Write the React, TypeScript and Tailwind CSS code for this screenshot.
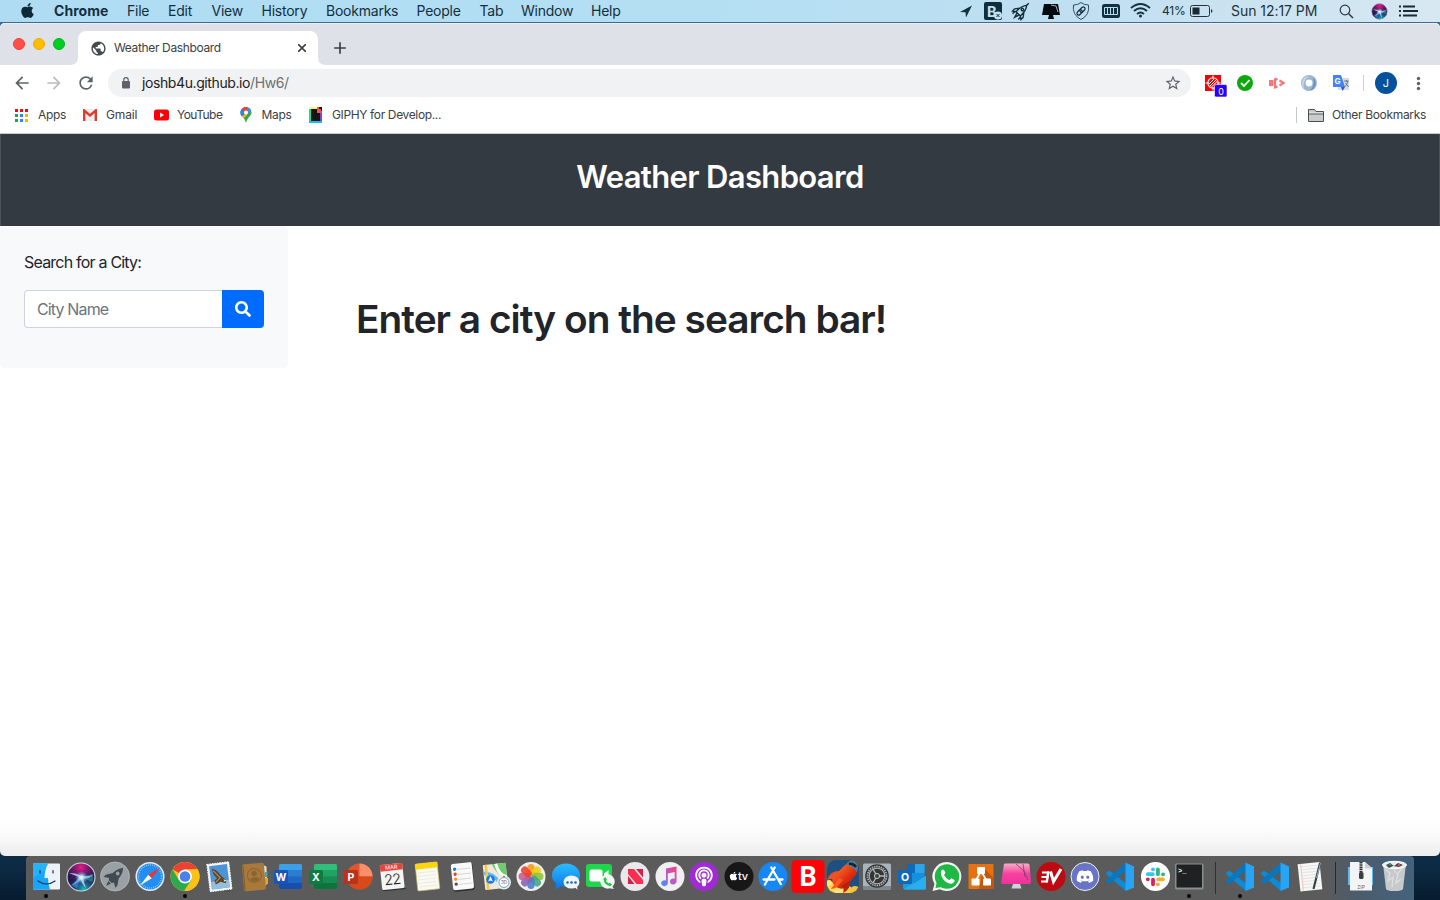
import React from "react";
import { FaApple, FaDiscord, FaSearch, FaPodcast } from "react-icons/fa";
import { MdArrowBack, MdArrowForward, MdRefresh, MdStarBorder, MdAdd, MdPublic } from "react-icons/md";

type Kids = { children?: React.ReactNode };

function Ic({ children }: Kids) {
  return (
    <svg width="34" height="34" viewBox="0 0 34 34" className="block shrink-0" fontFamily="Inter, 'Liberation Sans', sans-serif">
      {children}
    </svg>
  );
}

function Slot({ children, dot }: Kids & { dot?: boolean }) {
  return (
    <div className="flex w-[34.65px] shrink-0 flex-col items-center">
      {children}
      {dot && <span className="block h-1 w-1 rounded-full bg-black" />}
    </div>
  );
}

const petals: [number, string][] = [
  [0, "#f99a1b"], [45, "#f1cf0b"], [90, "#8fc33a"], [135, "#3fa985"],
  [180, "#4a7fc8"], [225, "#8463b8"], [270, "#c25f95"], [315, "#ef4030"],
];

function Office({ dark, mid, light, badge, letter }: { dark: string; mid: string; light: string; badge: string; letter: string }) {
  return (
    <Ic>
      <rect x="8" y="4" width="23" height="25" rx="1.5" fill={mid} />
      <path d="M8 5.5Q8 4 9.500 4H29.500Q31 4 31 5.500V10H8Z" fill={light} />
      <path d="M8 16.500H31V23H8Z" fill={dark} opacity=".5" />
      <path d="M8 23H31V27.500Q31 29 29.500 29H9.500Q8 29 8 27.500Z" fill={dark} />
      <rect x="3" y="10" width="14" height="14" rx="1.500" fill={badge} />
      <text x="10" y="21" fontSize="10.500" fontWeight="700" fill="#fff" textAnchor="middle">{letter}</text>
    </Ic>
  );
}

function Code() {
  return (
    <Ic>
      <path d="M3 13L6 10.500L24 24L23 31L3 14Z" fill="#0c8bd8" />
      <path d="M23 2.500L24 10L6 24L3 21.500V20.500Z" fill="#0877bd" />
      <path d="M22.500 2.500L31 6.500V27.500L22.500 31Z" fill="#27a4f4" />
    </Ic>
  );
}

function Siri({ s }: { s: number }) {
  return (
    <svg width={s} height={s} viewBox="0 0 30 30" className="block">
      <defs>
        <radialGradient id="siriGlow"><stop offset="0" stopColor="#fff" /><stop offset=".3" stopColor="#c5f2fb" stopOpacity=".85" /><stop offset="1" stopColor="#4aa8f0" stopOpacity="0" /></radialGradient>
        <radialGradient id="siriPink" cx=".5" cy=".15" r=".55"><stop offset="0" stopColor="#f0198c" /><stop offset="1" stopColor="#8a1a80" stopOpacity="0" /></radialGradient>
        <radialGradient id="siriTeal" cx=".6" cy=".95" r=".55"><stop offset="0" stopColor="#10c3c9" /><stop offset="1" stopColor="#1a5080" stopOpacity="0" /></radialGradient>
      </defs>
      <circle cx="15" cy="15" r="14" fill="#251a50" />
      <circle cx="15" cy="15" r="14" fill="url(#siriPink)" />
      <circle cx="15" cy="15" r="14" fill="url(#siriTeal)" />
      <path d="M3 11Q11 11 15 14Q21 15 27 13Q21 18 17 16Q18 21 20 26Q15 21 15 17Q11 22 6 23Q12 18 13 15Q8 13 3 11Z" fill="#d8f4fb" opacity=".75" />
      <path d="M15 15L5 23Q8 25 11 26Z" fill="#3f8ff0" opacity=".6" /><path d="M15 15L27 12Q28 17 26 20Z" fill="#3ad5d0" opacity=".4" />
      <circle cx="15.500" cy="15.500" r="6.500" fill="url(#siriGlow)" />
      <circle cx="15" cy="15" r="14" fill="none" stroke="#d8d5df" strokeWidth="1.100" />
    </svg>
  );
}

function Dock() {
  return (
    <div className="mx-[26px] flex h-[44px] rounded-t-[4px] bg-[linear-gradient(90deg,#5b5b5b_0,#5b5b5b_1300px,#4b5c6b_1330px,#44627d_1388px)] pl-[2.700px] pt-1">
      <Slot dot><Ic>
        <rect x="4" y="3.500" width="27" height="26" rx="1" fill="#edf2f8" />
        <path d="M4 3.500H19Q15.500 10 15.500 18H19Q19 24 21 29.500H4Z" fill="#16a6fb" />
        <path d="M4 3.500H19L15 11L4 18Z" fill="#2db9ff" opacity=".7" />
        <path d="M11 10.500V13M24 10.500V13M9 21Q17.500 27 26 21" stroke="#17324c" strokeWidth="1.200" fill="none" strokeLinecap="round" />
      </Ic></Slot>
      <Slot><div className="flex h-[34px] items-start pt-[1.500px]"><Siri s={30} /></div></Slot>
      <Slot><Ic>
        <circle cx="17" cy="16.500" r="14.500" fill="#9aa1a5" stroke="#bcc2c5" strokeWidth=".7" />
        <g transform="translate(17 16.500) rotate(43)" fill="#43494e">
          <path d="M0-12Q5-6 4 4L2 7H-2L-4 4Q-5-6 0-12Z" /><path d="M-4-1L-8 5V8L-3 5ZM4-1L8 5V8L3 5ZM-1.800 8H1.800L0 13Z" />
          <circle cy="-4" r="1.900" fill="#9aa1a5" />
        </g>
      </Ic></Slot>
      <Slot><Ic>
        <circle cx="17" cy="16.500" r="14.500" fill="#e8edf1" /><circle cx="17" cy="16.500" r="13" fill="#218ef0" />
        <circle cx="17" cy="16.500" r="11.500" fill="none" stroke="#b7e0ff" strokeWidth="1.500" strokeDasharray=".6 1.400" />
        <path d="M27 7.500L18.800 18.300L15.200 14.700Z" fill="#f3312f" /><path d="M7 25.500L15.200 14.700L18.800 18.300Z" fill="#f5f5f5" />
      </Ic></Slot>
      <Slot dot><Ic>
        <circle cx="17" cy="16.500" r="14.500" fill="#fbc116" />
        <path d="M17 16.500L4.500 9.300A14.500 14.500 0 0 1 29.600 9.300H17Z" fill="#ea4335" />
        <path d="M4.500 9.300L10.800 20.100L17 23.700L17 31A14.500 14.500 0 0 1 4.500 9.300Z" fill="#2da94f" />
        <path d="M17 31L23.200 20.100L10.800 20.100Z" fill="#2da94f" /><path d="M29.600 9.300A14.500 14.500 0 0 1 16 31L23.300 20L23.300 9.300Z" fill="#fbc116" />
        <circle cx="17" cy="16.500" r="6.900" fill="#fff" /><circle cx="17" cy="16.500" r="5.300" fill="#4a80ed" />
      </Ic></Slot>
      <Slot><Ic>
        <circle cx="25" cy="26" r="6" fill="#383c40" opacity=".35" />
        <g transform="rotate(-7 17 17)"><rect x="6.500" y="3" width="22" height="27.500" fill="#f3f5f6" stroke="#fff" strokeDasharray="1.500 1" />
          <rect x="8.500" y="5" width="18" height="23.500" fill="#4c94da" /><path d="M8.500 21H26.500V28.500H8.500Z" fill="#93c0e2" />
          <path d="M11 8Q15 9 18 14Q20 18 24 21L23 24L18 22L13 24L12 20L15 18Q11 14 11 8Z" fill="#5f4426" /><path d="M12 10L18 18L13 22" stroke="#b98d50" fill="none" strokeWidth="1.200" /><path d="M21 20L24.500 21L22 22.500Z" fill="#efe4c4" /></g>
      </Ic></Slot>
      <Slot><Ic>
        <path d="M26 5L29.500 6.500L30 24L27 27Z" fill="#ddd" /><path d="M28 12H30.500V17H28Z" fill="#37a9b4" /><path d="M28 18H31V24H28Z" fill="#e8a62b" />
        <g transform="rotate(-5 17 17)"><rect x="6" y="3.500" width="22" height="27" rx="2" fill="#a8793a" /><path d="M7 5V29" stroke="#895d27" strokeWidth="1" />
          <circle cx="17.500" cy="15.500" r="7" fill="none" stroke="#8b642f" /><circle cx="17.500" cy="13.500" r="2.800" fill="#8b642f" /><path d="M12.500 19.500Q17.500 14.500 22.500 19.500Q17.500 24 12.500 19.500Z" fill="#8b642f" /></g>
      </Ic></Slot>
      <Slot><Office light="#3ba0e8" mid="#2b7cd3" dark="#174faf" badge="#1854ba" letter="W" /></Slot>
      <Slot><Office light="#30be7a" mid="#21a366" dark="#10733e" badge="#107c41" letter="X" /></Slot>
      <Slot><Ic>
        <circle cx="18.500" cy="16.500" r="13" fill="#df552f" /><path d="M18.500 3.500A13 13 0 0 1 31.500 16.500H18.500Z" fill="#ff8f6b" /><path d="M5.500 16.500H31.500A13 13 0 0 1 5.500 16.500Z" fill="#d64a1b" />
        <rect x="3" y="10" width="14" height="14" rx="1.500" fill="#b9331a" /><text x="10" y="21" fontSize="10.500" fontWeight="700" fill="#fff" textAnchor="middle">P</text>
      </Ic></Slot>
      <Slot><Ic><g transform="rotate(-6 17 17)">
        <path d="M6 29L28 29L30 30.500H8Z" fill="#333" /><rect x="6" y="4" width="22.500" height="25" rx="1.500" fill="#f5f5f3" /><path d="M6 10.500V5.500Q6 4 7.500 4H27Q28.500 4 28.500 5.500V10.500Z" fill="#e7443e" />
        <text x="17.300" y="9.200" fontSize="5.500" fill="#fff" textAnchor="middle">MAR</text><text x="17" y="24.500" fontSize="14.500" fontWeight="300" fill="#222" textAnchor="middle" letterSpacing="-.9">22</text></g>
      </Ic></Slot>
      <Slot><Ic><g transform="rotate(-6 17 17)">
        <rect x="6.500" y="3" width="22" height="27" rx="1" fill="#fbfaf0" stroke="#c9bc73" strokeWidth=".7" /><path d="M6.500 3H28.500V8.500H6.500Z" fill="#fdd50e" /><path d="M8 12H26M8 15.500H26M8 19H26M8 22.500H26M8 26H26" stroke="#ddd" strokeWidth=".5" /></g>
      </Ic></Slot>
      <Slot><Ic><g transform="rotate(-6 17 17)">
        <rect x="7.500" y="4" width="21" height="27" rx="2" fill="#2e2e2e" /><rect x="7" y="3" width="21" height="26.500" rx="2" fill="#fafafa" />
        <path d="M13 9H26M13 14H26M13 19H26M13 24H26" stroke="#c8c8c8" strokeWidth=".7" />
        <circle cx="10.500" cy="8.500" r="1.700" fill="#2679f5" /><circle cx="10.500" cy="13.500" r="1.700" fill="#f04424" /><circle cx="10.500" cy="18.500" r="1.700" fill="#f69221" /><circle cx="10.500" cy="23.500" r="1.700" fill="#51575e" /></g>
      </Ic></Slot>
      <Slot><Ic><g transform="rotate(-6 16 17)">
        <rect x="5" y="4" width="23" height="25" rx="1" fill="#eee9da" /><path d="M14 4H28V18Q19 17 14 4Z" fill="#70cb6b" /><path d="M18 4Q20 16 28 18" stroke="#fff" strokeWidth="3" fill="none" /><path d="M5 12Q18 14 22 29" stroke="#62b7ef" strokeWidth="3.500" fill="none" /><path d="M8 4V29" stroke="#f7c746" strokeWidth="2.500" /></g>
        <circle cx="11.500" cy="19.500" r="4.300" fill="#1479ed" /><path d="M11.500 16L13.800 21.500L11.500 20.500L9.200 21.500Z" fill="#fff" />
        <circle cx="25" cy="22.500" r="7" fill="#e7edf1" /><circle cx="25" cy="22.500" r="5" fill="#fafafa" stroke="#6c8ba2" strokeWidth=".8" /><text x="25" y="24.200" fontSize="4.500" textAnchor="middle" fill="#567">3D</text><path d="M24 17H26L25 15.500Z" fill="#e22" />
      </Ic></Slot>
      <Slot><Ic>
        <circle cx="17" cy="16.500" r="14.500" fill="#efefef" />
        {petals.map(([a, c]) => <rect key={a} x="13.300" y="4" width="7.400" height="12" rx="3.700" fill={c} opacity=".88" transform={`rotate(${a} 17 16.500)`} />)}
      </Ic></Slot>
      <Slot><Ic>
        <defs><linearGradient id="msg" x2="0" y2="1"><stop stopColor="#2cbcff" /><stop offset="1" stopColor="#0876e8" /></linearGradient></defs>
        <path d="M17 3.500C25 3.500 31 8.500 31 15.500S25 27 17 27Q14 27 12 26Q9 29 5 29Q8 26 7 23Q3 20 3 15.500C3 8.500 9 3.500 17 3.500Z" fill="url(#msg)" />
        <ellipse cx="22.500" cy="22" rx="8" ry="6.600" fill="#eef5fc" /><path d="M25 26L28.500 30L28 25Z" fill="#eef5fc" />
        <circle cx="18.500" cy="22.500" r="1.300" fill="#176bb8" /><circle cx="22.500" cy="22.500" r="1.300" fill="#176bb8" /><circle cx="26.500" cy="22.500" r="1.300" fill="#176bb8" />
      </Ic></Slot>
      <Slot><Ic>
        <rect x="3" y="4" width="26" height="23" rx="3" fill="#1cd84a" /><rect x="6.500" y="9.500" width="13" height="12" rx="2" fill="#fff" /><path d="M21 13.500L25.500 10V21L21 17.500Z" fill="#fff" />
        <circle cx="24.500" cy="21.500" r="7.200" fill="#f4f6f5" /><path d="M25 28L31 29L28 25Z" fill="#f4f6f5" /><path d="M20.500 19L22 17L24 19.500L23 21L25.500 23.500L27 22.700L29 24.500L27.500 26.300Q21 25 20.500 19Z" fill="#20c849" />
      </Ic></Slot>
      <Slot><Ic>
        <circle cx="17" cy="16.500" r="14.500" fill="#e9e9eb" /><path d="M10 9H16L25 20V24H18.500L10 14Z" fill="#f92e52" /><path d="M18 9H25V17.500ZM10 16V24H16.500Z" fill="#d71e45" />
      </Ic></Slot>
      <Slot><Ic>
        <defs><linearGradient id="music" x1="1" y1="0" x2="0" y2="1"><stop stopColor="#fb3f6a" /><stop offset=".5" stopColor="#c055ce" /><stop offset="1" stopColor="#2e9ef8" /></linearGradient></defs>
        <circle cx="17" cy="16.500" r="14.500" fill="#f0f0f2" /><path d="M13 8.500L23.500 6.500V21.200A3.300 3 0 1 1 21.700 18.800V12L14.800 13.500V23A3.300 3 0 1 1 13 20.500Z" fill="url(#music)" />
      </Ic></Slot>
      <Slot><Ic><circle cx="17" cy="16.500" r="14.500" fill="#a12ad4" /><FaPodcast x="7" y="6.500" size={20} color="#fff" /></Ic></Slot>
      <Slot><Ic><circle cx="17" cy="16.500" r="14.500" fill="#171718" /><FaApple x="6.500" y="11" size={10} color="#fff" /><text x="16" y="20" fontSize="11" fontWeight="500" fill="#fff" letterSpacing="-.3">tv</text></Ic></Slot>
      <Slot><Ic><circle cx="17" cy="16.500" r="14.500" fill="#1787f5" /><path d="M18.700 7.500L10.300 22M15.300 7.500L24.800 24M7.500 19.500H18.500M22.500 19.500H26.500M9.500 23.400L8.900 24.500" stroke="#fff" strokeWidth="2.300" strokeLinecap="round" /></Ic></Slot>
      <Slot><Ic><rect x=".5" y="0" width="33" height="33" rx="4.500" fill="#fb0307" /><text x="17" y="26" fontFamily="Roboto, sans-serif" fontSize="27" fontWeight="700" fill="#fff" textAnchor="middle">B</text></Ic></Slot>
      <Slot><Ic>
        <defs><linearGradient id="hull" x1="0" y1="0" x2="1" y2="1"><stop offset=".2" stopColor="#fb6424" /><stop offset=".6" stopColor="#dc2c10" /><stop offset="1" stopColor="#9c1608" /></linearGradient></defs>
        <clipPath id="rk"><rect x="1" y="0" width="32" height="33" rx="9" /></clipPath>
        <g clipPath="url(#rk)"><rect width="34" height="34" fill="#1d4f80" />
          <circle cx="6" cy="28" r="6" fill="#ffd44c" /><circle cx="14" cy="30" r="6" fill="#ffe27a" /><circle cx="22" cy="31" r="5" fill="#ffcf45" /><circle cx="29" cy="31" r="5" fill="#f8c23e" /><circle cx="3" cy="23" r="3" fill="#ffe27a" />
          <path d="M19 5Q24 2 30 8Q33 12 28 17L20 27Q15 31 9 26Q4 21 8 16Z" fill="url(#hull)" />
          <path d="M13 11Q4 11 1 20Q5 18 9 20Z" fill="#f2501d" /><path d="M24 21Q25 29 17 33Q19 28 15 26Z" fill="#b8210c" />
          <path d="M13 18L5 29L10 28L17 20Z" fill="#fb5a22" />
          <path d="M20 5Q22 0 28 0Q34 4 31 12Q26 6 20 5Z" fill="#5c7b8a" /><path d="M23 4Q27 3 30 7" stroke="#0f2330" strokeWidth="2.600" fill="none" /></g>
      </Ic></Slot>
      <Slot><Ic>
        <rect x="3" y="3.500" width="28" height="26" rx="1.500" fill="#a8b4bc" /><path d="M3 26H31V29.500H3Z" fill="#7d878e" /><circle cx="17" cy="16" r="11.800" fill="#333537" /><circle cx="17" cy="16" r="9.500" fill="none" stroke="#b2b5b7" strokeWidth="1.800" strokeDasharray="1.400 .9" /><circle cx="17" cy="16" r="7.800" fill="none" stroke="#aeb2b5" strokeWidth="1.100" /><path d="M17 16L25 16M17 16L13 9M17 16L13 23" stroke="#b6babd" strokeWidth="1.400" /><circle cx="17" cy="16" r="2.600" fill="#444" stroke="#c4c7c9" />
      </Ic></Slot>
      <Slot><Ic>
        <rect x="12" y="4" width="17.500" height="18" rx="1" fill="#1490df" /><path d="M12 4H20V13H12Z" fill="#0f6abc" /><path d="M20 4H29.500V13H20Z" fill="#29a5ec" /><path d="M8 17L20 23L31 16V28Q31 29.500 29.500 29.500H10Q8 29.500 8 28Z" fill="#1b9de2" /><path d="M31 16L9 29Q9 29.500 10 29.500H29.500Q31 29.500 31 28Z" fill="#2aaef0" />
        <rect x="3" y="10" width="14" height="14" rx="1.500" fill="#0f68b8" /><text x="10" y="21" fontSize="10.500" fontWeight="700" fill="#fff" textAnchor="middle">O</text>
      </Ic></Slot>
      <Slot><Ic>
        <path d="M17 2A14.500 14.500 0 1 1 10 29.300L2.500 31L4.500 24A14.500 14.500 0 0 1 17 2Z" fill="#f4f6f5" /><circle cx="17" cy="16.500" r="12.200" fill="#20b844" /><path d="M5.500 28L7 21L12 27Z" fill="#20b844" />
        <path d="M11 11Q12.500 8.500 14 10L15.500 13L14 15Q16 19 19.500 20.200L21.200 18.300L24.500 20Q25 22.500 21.500 23.800C16 24 10 17.500 11 11Z" fill="#fff" />
      </Ic></Slot>
      <Slot><Ic>
        <rect x="4.500" y="4" width="25" height="25" rx="1" fill="#e8710f" /><path d="M20 8L29.500 18V29H15Z" fill="#c45709" /><path d="M17 11L10.500 23M17 11L24 23" stroke="#fff" strokeWidth="1.800" /><rect x="13" y="7" width="8" height="7" rx="1" fill="#fff" /><rect x="7.500" y="18.500" width="8" height="7" rx="1" fill="#fff" /><rect x="19" y="18.500" width="8" height="7" rx="1" fill="#fff" />
      </Ic></Slot>
      <Slot><Ic>
        <defs><linearGradient id="pinkScreen" x2="0" y2="1"><stop stopColor="#f9acc9" /><stop offset=".5" stopColor="#f9409f" /><stop offset="1" stopColor="#ed339d" /></linearGradient></defs>
        <path d="M5 4Q5 3.500 6.500 3.500H29Q30.500 3.500 30.500 5L32 22Q32 24 30 24H4Q2 24 2.200 22Z" fill="url(#pinkScreen)" /><path d="M14 24H21L22.500 28.500H12.500Z" fill="#ced1d6" /><path d="M17 4L25 11L29 20M24 4L26 17" stroke="#853e68" strokeWidth=".8" fill="none" />
      </Ic></Slot>
      <Slot><Ic><circle cx="17" cy="16.500" r="14.500" fill="#bd0910" /><path d="M8 12.500H15M7.500 17H14.500M7 21.500H13.500" stroke="#fff" strokeWidth="2.200" /><path d="M13 11.500H15.500L14 22.500H11.500Z" fill="#fff" /><path d="M16.500 11.500L19.500 21.500L27 9" stroke="#fff" strokeWidth="3" fill="none" /></Ic></Slot>
      <Slot><Ic><circle cx="17" cy="16.500" r="14" fill="#6874c5" stroke="#eee" /><FaDiscord x="8" y="7.500" size={18} color="#fff" /></Ic></Slot>
      <Slot><Code /></Slot>
      <Slot><Ic><circle cx="17.500" cy="16.500" r="14.500" fill="#fff" /><g strokeWidth="3.800" strokeLinecap="round">
        <path d="M9.800 14.200H14.800M15 9.300V9.400" stroke="#36c5f0" /><path d="M19.900 9.500V14.200M25 14.300H25.100" stroke="#2eb67d" /><path d="M20.200 19.300H25M19.900 24.300V24.400" stroke="#ecb22e" /><path d="M15 19.600V24.300M9.800 19.300H9.900" stroke="#e01e5a" /></g>
      </Ic></Slot>
      <Slot dot><Ic><rect x="3" y="3.500" width="28.500" height="26" rx="1.500" fill="#87908c" /><rect x="4.500" y="4.500" width="25.500" height="23" rx=".5" fill="#202122" /><text x="6" y="13" fontFamily="Liberation Mono, monospace" fontSize="7" fontWeight="700" fill="#fff">&gt;_</text></Ic></Slot>
      <div className="flex w-[16.500px] shrink-0 justify-center pt-[2px]"><span className="ml-[1px] h-[32px] w-px bg-[#303030]" /></div>
      <Slot dot><Code /></Slot>
      <Slot><Code /></Slot>
      <Slot><Ic><g transform="rotate(-6 17 17)"><rect x="6" y="3" width="22" height="27.500" fill="#f7f7f5" /><path d="M8 6H26M8 9H26M8 12H26M8 15H26M8 18H26M8 21H26M8 24H26M8 27H26" stroke="#d0d3d7" strokeWidth=".5" /><path d="M9 3V30" stroke="#f1a5a5" strokeWidth=".6" /></g><path d="M27 3L20.500 29" stroke="#343941" strokeWidth="2" /><path d="M27.500 3L23.500 18" stroke="#8eb0c8" strokeWidth="1" /></Ic></Slot>
      <div className="flex w-[16.500px] shrink-0 justify-center pt-[2px]"><span className="h-[32px] w-px bg-[#25292d]" /></div>
      <Slot><Ic><path d="M4 7H29V25H4Z" fill="#62bcec" /><path d="M6 2H21L28 8V30.500H6Z" fill="#f3f4f5" /><path d="M21 2V8.500H28Z" fill="#cbd1d5" /><path d="M17 2V14" stroke="#333" strokeWidth="3" strokeDasharray="1.500 .7" /><rect x="15" y="12" width="4.500" height="7" rx="1.500" fill="#3c3d3f" /><text x="17" y="28.500" fontSize="5" textAnchor="middle" fill="#666">ZIP</text></Ic></Slot>
      <Slot><Ic>
        <path d="M5 4H28L25 29Q24 31 16.500 31Q9 31 8 29Z" fill="#c6cacb" /><path d="M7 9L12 13L10 21L15 17L14 27M16 10L20 15L18 23L23 19M24 9L20 13" stroke="#eef0f0" strokeWidth="1.200" fill="none" opacity=".6" /><ellipse cx="16.500" cy="5" rx="12" ry="3.700" fill="#eee" stroke="#fff" /><path d="M8 5L12 3L16 6L20 3L25 5L21 7L15 6L11 8Z" fill="#454a4d" /><circle cx="12" cy="4" r="1.200" fill="#1aa2b5" /><circle cx="21" cy="5" r="1.200" fill="#d44e38" />
      </Ic></Slot>
    </div>
  );
}

function MenuBar() {
  return (
    <div className="flex h-[22px] items-center bg-[linear-gradient(90deg,#afdcf3_0,#b4dff3_50%,#c0dff1_75%,#d7e8f1_100%)] text-[14px] leading-[20px] tracking-[-0.230px] text-[#12303f] [&>span]:-mt-[1px]">
      <div className="w-[54px] pl-[19px]"><FaApple size={17} color="#0d2836" className="-mt-[2px]" /></div>
      <span className="w-[73px] font-bold tracking-[0.050px]">Chrome</span>
      <span className="w-[41px]">File</span>
      <span className="w-[43.500px]">Edit</span>
      <span className="w-[50px]">View</span>
      <span className="w-[64.500px]">History</span>
      <span className="w-[90.500px]">Bookmarks</span>
      <span className="w-[63px]">People</span>
      <span className="w-[41.500px]">Tab</span>
      <span className="w-[70px]">Window</span>
      <span>Help</span>
      <svg className="ml-auto block shrink-0" width="265" height="22" viewBox="955 0 265 22">
        <path d="M972 5.500L960 12L965.500 12.200L966 17.500Z" fill="#12303f" />
        <rect x="984" y="2" width="18" height="18" rx="2" fill="#0f2d3d" /><text x="987" y="16.500" fontFamily="Roboto" fontWeight="700" fontSize="15" fill="#c2e2f2">B</text><circle cx="998" cy="15.500" r="4" fill="#c2e2f2" /><path d="M996.500 14L999.500 17M999.500 14L996.500 17" stroke="#0f2d3d" />
        <g transform="translate(1021 11) rotate(45)" fill="none" stroke="#12303f" strokeWidth="1.400"><path d="M0-8Q3.500-4 3 4H-3Q-3.500-4 0-8ZM-3-1L-6 3V6L-3 4M3-1L6 3V6L3 4M-1.500 4L0 9L1.500 4" /><circle cy="-2" r="1.200" /><path d="M0-8V-11M-4 5V8M4 5V8" /></g>
        <path d="M1044 4H1058L1060 15H1042Z" fill="#030b10" /><path d="M1049 15H1053L1054 19H1048Z" fill="#030b10" /><path d="M1051 5L1056 6L1058 12" stroke="#b8dcef" strokeWidth=".8" fill="none" />
        <path d="M1081 2.500Q1084 5 1088.500 5Q1090 15 1081 19.500Q1072 15 1073.500 5Q1078 5 1081 2.500Z" fill="none" stroke="#31505f" strokeWidth="1" /><g fill="none" stroke="#12303f" strokeWidth="1.200" transform="translate(1081 11) rotate(-45)"><rect x="-5" y="-1.800" width="6" height="3.600" rx="1.800" /><rect x="-1" y="-1.800" width="6" height="3.600" rx="1.800" /></g>
        <rect x="1102" y="4" width="18" height="14" rx="2.500" fill="#12303f" /><path d="M1104.500 7.500H1117.500V14.500H1104.500ZM1107.500 7.500V14.500M1110.500 7.500V14.500M1113.500 7.500V14.500" fill="none" stroke="#b9ddee" strokeWidth="1" />
        <g fill="none" stroke="#12303f" strokeWidth="1.900"><path d="M1131 8Q1140.500 0 1150 8M1134 11Q1140.500 5.500 1147 11M1137 14Q1140.500 11 1144 14" /></g><circle cx="1140.500" cy="16" r="1.500" fill="#12303f" />
        <text x="1162" y="15" fontFamily="Inter" fontSize="12" letterSpacing="-.15" fill="#12303f">41%</text>
        <rect x="1190.500" y="5.500" width="19" height="11" rx="2" fill="none" stroke="#25323a" /><rect x="1192.500" y="7.500" width="7" height="7" fill="#172a35" /><path d="M1211 9Q1214 11 1211 13Z" fill="#25323a" />
      </svg>
      <span className="ml-[11px] w-[108px] shrink-0 tracking-[-0.050px] text-[#21323c]">Sun 12:17 PM</span>
      <svg width="15" height="15" viewBox="0 0 15 15" className="shrink-0"><circle cx="6" cy="6" r="4.800" fill="none" stroke="#2a3b45" strokeWidth="1.200" /><path d="M9.500 9.500L14 14" stroke="#2a3b45" strokeWidth="1.500" /></svg>
      <div className="ml-[17px]"><Siri s={17} /></div>
      <svg width="19" height="12" viewBox="0 0 19 12" className="ml-[11px] mr-[22px] shrink-0"><path d="M4 1.500H16M4 6H19M4 10.500H18M0 1.500H2M0 6H2M0 10.500H2" stroke="#1a2b34" strokeWidth="1.900" /></svg>
    </div>
  );
}

const appColors = ["#f30a0a", "#f30a0a", "#f30a0a", "#1da354", "#3384ed", "#f7b500", "#1da354", "#3384ed", "#f7b500"];

function Browser() {
  return (
    <div className="bg-white text-[#3c4043]">
      <div className="flex h-[42px] items-end rounded-t-[5px] border-t border-[#eceef2] bg-[#dee1e8]">
        <div className="flex h-[42px] w-[78px] shrink-0 items-center gap-2 pl-[13px]">
          <i className="h-3 w-3 rounded-full border border-[#ed4039] bg-[#ff4f49]" /><i className="h-3 w-3 rounded-full border border-[#eaae00] bg-[#ffbd00]" /><i className="h-3 w-3 rounded-full border border-[#00b61b] bg-[#00cf24]" />
        </div>
        <svg width="8" height="8" className="-ml-2 shrink-0"><path d="M8 0V8H0Q8 8 8 0Z" fill="#fff" /></svg>
        <div className="flex h-[34px] w-[240px] items-center rounded-t-[8px] bg-white pl-[11.500px] pr-[12px] text-[12px]">
          <MdPublic size={17} color="#45494e" /><span className="ml-[7.500px] tracking-[-0.360px]">Weather Dashboard</span>
          <svg width="8" height="8" viewBox="0 0 8 8" className="ml-auto"><path d="M0 0L8 8M8 0L0 8" stroke="#3c4043" strokeWidth="1.600" /></svg>
        </div>
        <svg width="8" height="8" className="shrink-0"><path d="M0 0V8H8Q0 8 0 0Z" fill="#fff" /></svg>
        <MdAdd size={20} color="#3c4043" className="mb-[7px] ml-1" />
      </div>
      <div className="flex h-9 items-center">
        <div className="flex w-[108px] shrink-0 gap-[12px] pl-[12px]"><MdArrowBack size={20} color="#5f6368" /><MdArrowForward size={20} color="#babcbe" /><MdRefresh size={20} color="#5f6368" /></div>
        <div className="flex h-7 w-[1083px] items-center rounded-full bg-[#f1f2f4] pl-[12px] pr-[9px] text-[14px] text-[#202124]">
          <svg width="12" height="14" viewBox="0 0 12 14"><rect x="2" y="5" width="8" height="7.500" rx="1" fill="#5f6368" /><path d="M3.800 5.500V3.800A2.200 2.200 0 0 1 8.200 3.800V5.500" fill="none" stroke="#5f6368" strokeWidth="1.200" /></svg>
          <span className="-mt-[1px] ml-[10px] tracking-[-0.400px]">joshb4u.github.io<span className="text-[#6c7074]">/Hw6/</span></span><MdStarBorder size={18} color="#5f6368" className="ml-auto" />
        </div>
        <svg width="249" height="36" viewBox="1191 65 249 36" className="block shrink-0">
          <rect x="1205" y="75" width="16" height="16" fill="#f40306" /><circle cx="1213" cy="83" r="5.200" fill="none" stroke="#fff" strokeWidth="1.100" /><path d="M1213 75.500V79M1213 87V90.500M1205.500 83H1209M1217 83H1220.500M1209.500 86.500L1216.500 79.500M1211 87.500L1217.500 81M1209 84L1214 79" stroke="#fff" strokeWidth="1" /><rect x="1214.500" y="84.500" width="12.500" height="12.500" rx="1.500" fill="#2b00fa" stroke="#fff" strokeWidth=".6" /><text x="1221" y="94.500" fontFamily="Inter" fontSize="9" fill="#fff" textAnchor="middle">0</text>
          <circle cx="1245" cy="83" r="8" fill="#0ca80d" /><path d="M1241 83L1244 86L1249.500 80" stroke="#fff" strokeWidth="1.800" fill="none" />
          <path d="M1269 80H1273.500V86H1269Z" fill="#f77678" /><path d="M1275 78.500V87.500L1277.500 86.500M1275 78.500L1277.500 79.700M1279.500 80.500L1283.500 83L1279.500 85.500" fill="none" stroke="#f77678" strokeWidth="2.200" />
          <circle cx="1309" cy="83" r="5.700" fill="none" stroke="#9db7d1" strokeWidth="4.600" /><path d="M1304 88.500A7.500 7.500 0 0 1 1309 76Q1302 81 1304 88.500" fill="#c9d9e8" /><path d="M1313 77.500A7.500 7.500 0 0 1 1310 90.500Q1315 86 1313 77.500" fill="#6a93bd" />
          <rect x="1338" y="78" width="11" height="12" fill="#d7dce0" /><path d="M1333 75H1341L1345 87H1333Z" fill="#4384f3" /><path d="M1341 87H1345L1342.500 91Z" fill="#3459b9" /><text x="1337.500" y="84" fontFamily="Inter" fontSize="8" fontWeight="700" fill="#fff" textAnchor="middle">G</text><path d="M1344 81H1348.500M1346.500 80V82M1348 81Q1347 85 1344.500 87M1345.500 83L1348.500 87" stroke="#687e8a" strokeWidth="1" fill="none" />
          <path d="M1363.500 75V91" stroke="#ccd0d4" /><circle cx="1386" cy="83" r="11" fill="#04529e" /><text x="1386" y="87" fontFamily="Inter" fontSize="11" fill="#fff" textAnchor="middle">J</text>
          <g fill="#5f6368"><circle cx="1418.500" cy="78.500" r="1.700" /><circle cx="1418.500" cy="83.500" r="1.700" /><circle cx="1418.500" cy="88.500" r="1.700" /></g>
        </svg>
      </div>
      <div className="flex h-[33px] items-center border-b border-[#c9cbd0] pb-[4px] text-[12px] tracking-[-0.320px]">
        <svg width="13" height="13" viewBox="0 0 13 13" className="ml-[15px] shrink-0">{appColors.map((c, i) => <rect key={i} x={(i % 3) * 5} y={Math.floor(i / 3) * 5} width="3" height="3" fill={c} />)}</svg>
        <span className="ml-[10px] w-[45px]">Apps</span>
        <svg width="14" height="12" viewBox="0 0 14 12"><rect width="14" height="12" fill="#eee" /><path d="M1.200 12V1.500L7 6.500L12.800 1.500V12" fill="none" stroke="#dc3b2e" strokeWidth="2.400" /></svg>
        <span className="ml-[9px] w-[47.500px] tracking-[-0.150px]">Gmail</span>
        <svg width="15" height="12" viewBox="0 0 15 12"><rect y=".5" width="15" height="11" rx="2.500" fill="#fb0006" /><path d="M6 3.500L10 6L6 8.500Z" fill="#fff" /></svg>
        <span className="ml-[8.500px] w-[62.500px] tracking-[-0.550px]">YouTube</span>
        <svg width="12" height="16" viewBox="0 0 12 16"><path d="M6 0A5.500 5.500 0 0 1 11.500 5.500C11.500 9 7.500 10 6 16C4.500 10 .5 9 .5 5.500A5.500 5.500 0 0 1 6 0Z" fill="#33a853" /><path d="M6 5.500L1.700 2A5.500 5.500 0 0 1 8 .4Z" fill="#e84335" /><path d="M8 .4A5.500 5.500 0 0 1 11 4L6 9Z" fill="#438af2" /><path d="M1.700 2L6 5.500L1.800 9.500A6 6 0 0 1 1.700 2Z" fill="#3c7de8" /><path d="M1.800 9.500L8 5L7 8L3.500 11.500Z" fill="#fbbc05" /><circle cx="6" cy="5.500" r="2" fill="#fff" /></svg>
        <span className="ml-[10px] w-[47px] tracking-[-0.300px]">Maps</span>
        <svg width="13" height="16" viewBox="0 0 13 16"><rect width="13" height="16" fill="#141416" /><path d="M0 0H8V2H0Z" fill="#fcf08b" /><path d="M0 2H2V14H0Z" fill="#15df92" /><path d="M0 14H13V16H0Z" fill="#10bff5" /><path d="M11 5H13V14H11Z" fill="#8741c4" /><path d="M8 0H10V2H12V4H13V6H8Z" fill="#f34f54" /></svg>
        <span className="ml-[10.500px] tracking-[-0.360px]">GIPHY for Develop...</span>
        <span className="ml-auto h-4 w-px bg-[#c7cacd]" />
        <svg width="16" height="13" viewBox="0 0 16 13" className="ml-[11px]"><path d="M.5 12.500V.5H6.500L8 2.500H15.500V12.500Z" fill="#cacbcd" stroke="#4c4f52" /><path d="M1 3.500H15V5H1Z" fill="#eee" /><path d="M1 5H15" stroke="#55585b" /></svg>
        <span className="ml-[8px] w-[108px]">Other Bookmarks</span>
      </div>
    </div>
  );
}

export default function App() {
  return (
    <div className="flex h-[900px] w-[1440px] flex-col overflow-hidden bg-[linear-gradient(180deg,#3b6d90_0,#3b6d90_60px,#0b2b42_800px,#0c2a44_870px,#061b2e_900px)] font-['Inter','Liberation_Sans',sans-serif] whitespace-nowrap">
      <MenuBar />
      <div className="h-px bg-[#3b6d90]" />
      <div className="flex h-[833px] flex-col overflow-hidden rounded-[5px] bg-[linear-gradient(180deg,#fff_0,#fff_795px,#fafafa_812px,#ececec_833px)]">
        <Browser />
        <header className="flex h-[92px] shrink-0 justify-center border-x border-[#4c5359] bg-[#343a42] pt-[24px] text-white">
          <h1 className="text-[31px] leading-[38px] font-semibold tracking-[-0.650px]">Weather Dashboard</h1>
        </header>
        <main className="flex items-start">
          <aside className="h-[142px] w-[288px] shrink-0 rounded-[5px] bg-[#f8f9fb] px-6 pt-6">
            <label className="block text-[16px] leading-6 tracking-[-0.790px] text-[#212529]">Search for a City:</label>
            <div className="mt-4 flex h-[38px]">
              <div className="flex w-[198px] items-center rounded-l-[4px] border border-r-0 border-[#ced4da] bg-white pl-3 text-[16px] tracking-[-0.850px] text-[#6c757d]">City Name</div>
              <button className="flex w-[42px] items-center justify-center rounded-r-[4px] bg-[#006cff]"><FaSearch size={16} color="#fff" /></button>
            </div>
          </aside>
          <h2 className="ml-[68px] mt-[69px] text-[38.8px] leading-[48px] font-semibold tracking-[-0.970px] text-[#212529]">Enter a city on the search bar!</h2>
        </main>
      </div>
      <Dock />
    </div>
  );
}
